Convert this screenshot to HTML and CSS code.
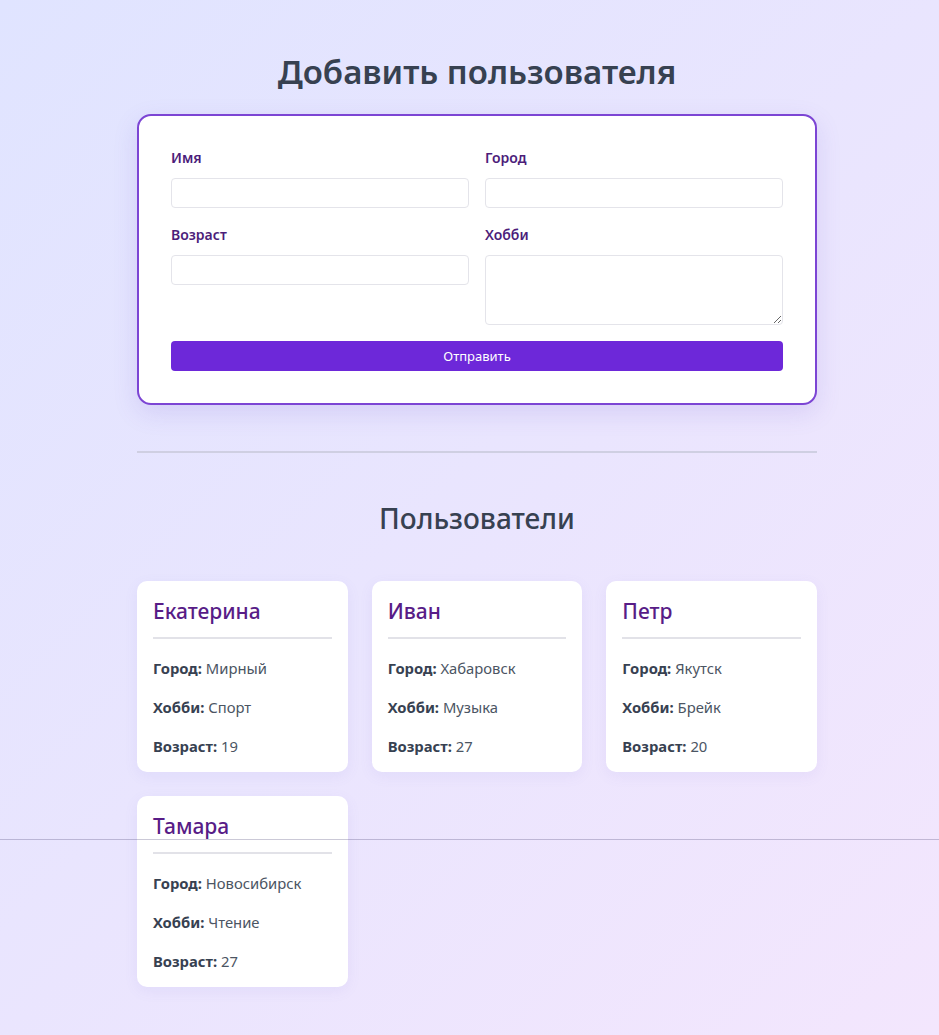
FILE: index.html
```html
<!DOCTYPE html>
<html lang="ru">
<head>
<meta charset="utf-8">
<title>Пользователи</title>
<link rel="stylesheet" href="styles.css">
</head>
<body>
<main class="page">
  <h1 class="title">Добавить пользователя</h1>
  <form class="form">
    <div class="grid">
      <div class="field">
        <label class="label">Имя</label>
        <input class="input" type="text">
      </div>
      <div class="field">
        <label class="label">Город</label>
        <input class="input" type="text">
      </div>
      <div class="field">
        <label class="label">Возраст</label>
        <input class="input" type="text">
      </div>
      <div class="field">
        <label class="label">Хобби</label>
        <textarea class="input textarea"></textarea>
      </div>
    </div>
    <button class="submit" type="button">Отправить</button>
  </form>
  <hr class="divider">
  <h2 class="subtitle">Пользователи</h2>
  <section class="cards">
    <article class="card">
      <h3 class="name">Екатерина</h3>
      <hr class="card-hr">
      <p class="row"><b>Город:</b> Мирный</p>
      <p class="row"><b>Хобби:</b> Спорт</p>
      <p class="row"><b>Возраст:</b> 19</p>
    </article>
    <article class="card">
      <h3 class="name">Иван</h3>
      <hr class="card-hr">
      <p class="row"><b>Город:</b> Хабаровск</p>
      <p class="row"><b>Хобби:</b> Музыка</p>
      <p class="row"><b>Возраст:</b> 27</p>
    </article>
    <article class="card">
      <h3 class="name">Петр</h3>
      <hr class="card-hr">
      <p class="row"><b>Город:</b> Якутск</p>
      <p class="row"><b>Хобби:</b> Брейк</p>
      <p class="row"><b>Возраст:</b> 20</p>
    </article>
    <article class="card">
      <h3 class="name">Тамара</h3>
      <hr class="card-hr">
      <p class="row"><b>Город:</b> Новосибирск</p>
      <p class="row"><b>Хобби:</b> Чтение</p>
      <p class="row"><b>Возраст:</b> 27</p>
    </article>
  </section>
</main>
<div class="fold-line"></div>
</body>
</html>
```

FILE: styles.css
```css
html, body {
  margin: 0;
  padding: 0;
}
body {
  min-height: 1035px;
  background: linear-gradient(135deg, #e0e4ff 0%, #f3e6fd 100%);
  font-family: "Noto Sans", "Open Sans", sans-serif;
  color: #374151;
  padding-left: 15px;
  box-sizing: border-box;
  position: relative;
}
.page {
  width: 680px;
  margin: 0 auto;
  padding-top: 48px;
  padding-bottom: 46px;
}
.title {
  margin: 0 0 18px;
  text-align: center;
  font-size: 33px;
  line-height: 48px;
  font-weight: 600;
  color: #374151;
}
.form {
  background: #fff;
  border: 2px solid #7c45d4;
  border-radius: 14px;
  padding: 32px 32px 32px;
  box-shadow: 0 8px 24px rgba(110, 80, 200, 0.15);
}
.grid {
  display: grid;
  grid-template-columns: 1fr 1fr;
  column-gap: 16px;
  row-gap: 17px;
}
.field {
  display: flex;
  flex-direction: column;
  align-items: stretch;
}
.label {
  font-size: 14px;
  line-height: 20px;
  font-weight: 600;
  color: #4c1d7a;
  margin-bottom: 10px;
}
.input {
  box-sizing: border-box;
  height: 30px;
  border: 1px solid #e4e4ea;
  border-radius: 4px;
  background: #fff;
  font: inherit;
  margin: 0;
}
.textarea {
  height: 70px;
  resize: vertical;
}
.submit {
  display: block;
  width: 100%;
  margin-top: 16px;
  height: 30px;
  border: none;
  border-radius: 4px;
  background: #6d28d9;
  color: #fff;
  font-family: inherit;
  font-size: 13px;
}
.divider {
  margin: 46px 0 0;
  border: none;
  height: 2px;
  background: #cfcfe2;
}
.subtitle {
  margin: 45px 0 43px;
  text-align: center;
  font-size: 28px;
  line-height: 40px;
  font-weight: 500;
  color: #374151;
}
.cards {
  display: grid;
  grid-template-columns: repeat(3, 1fr);
  gap: 24px;
}
.card {
  background: #fff;
  border-radius: 10px;
  padding: 16px 16px 15px;
  box-shadow: 0 4px 14px rgba(120, 100, 200, 0.08);
}
.name {
  margin: 0;
  font-size: 21px;
  line-height: 28px;
  font-weight: 500;
  color: #581c87;
}
.card-hr {
  margin: 12px 0 0;
  border: none;
  height: 2px;
  background: #e2e2e8;
}
.row {
  margin: 17px 0 0;
  font-size: 14.8px;
  line-height: 22px;
  color: #4b5563;
}
.row:first-of-type {
  margin-top: 18px;
}
.row b {
  color: #374151;
  font-weight: 700;
}
.fold-line {
  position: absolute;
  left: 0;
  right: 0;
  top: 839px;
  height: 1px;
  background: rgba(70, 60, 110, 0.28);
}
```
